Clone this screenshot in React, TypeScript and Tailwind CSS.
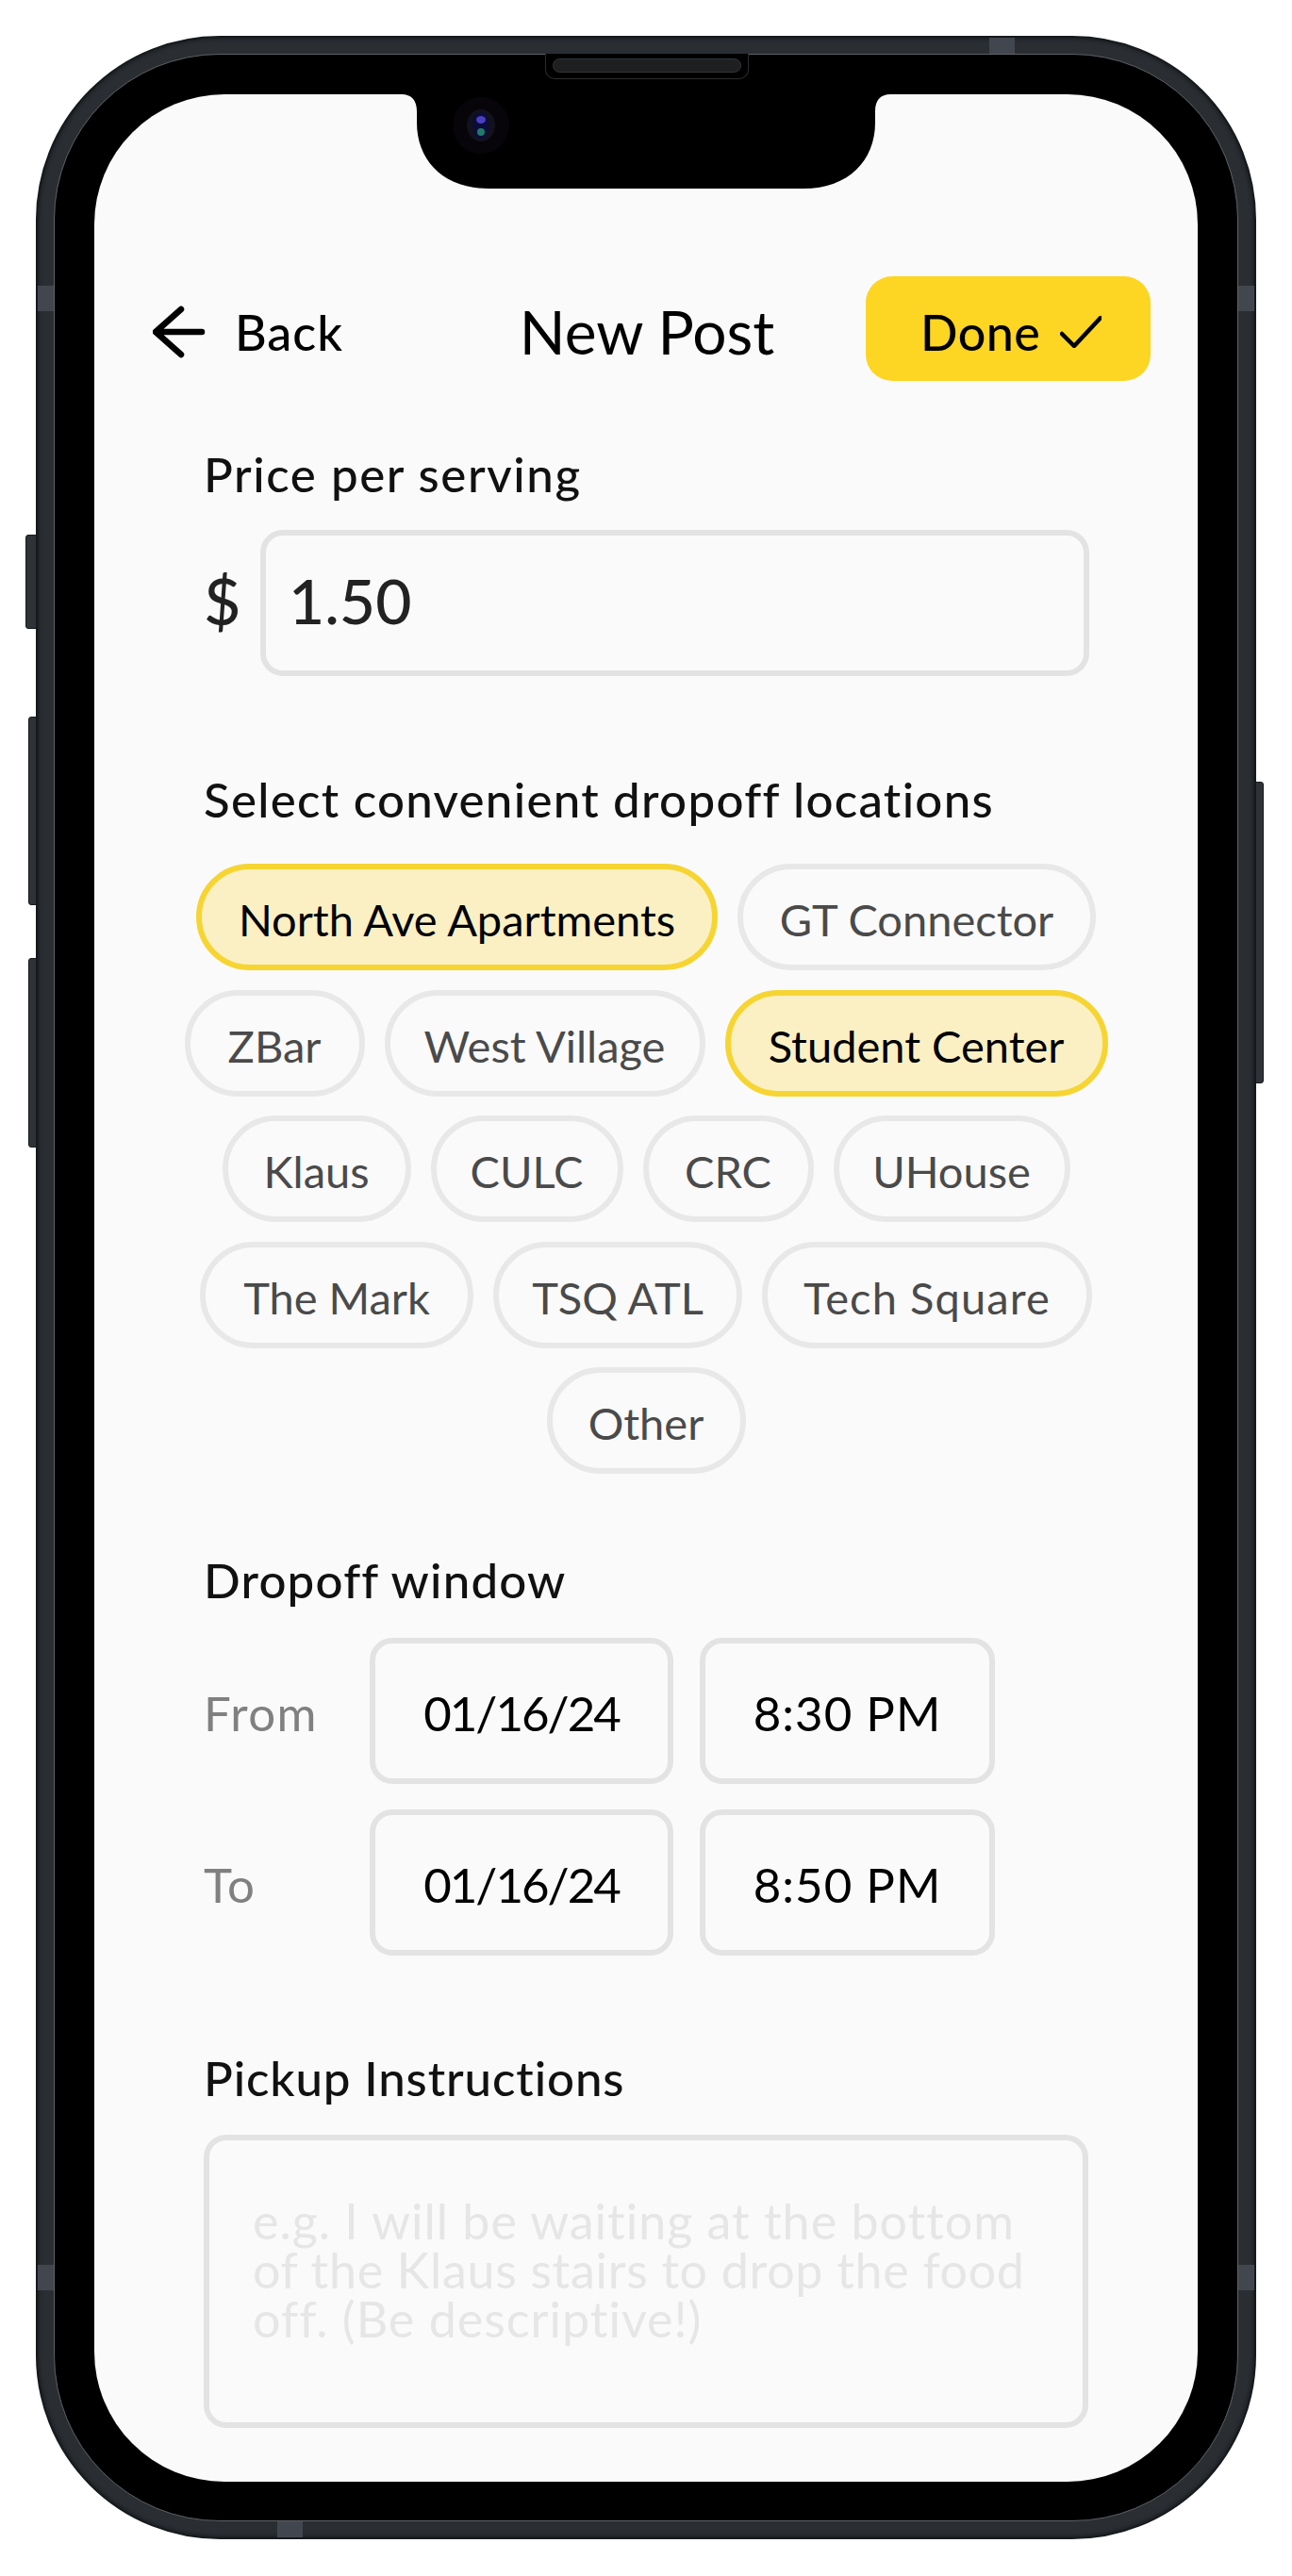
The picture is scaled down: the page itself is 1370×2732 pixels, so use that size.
const font = "font-['Lato','Liberation_Sans',sans-serif]";

const chips = [
  { label: "North Ave Apartments", width: "w-[553px]", selected: true },
  { label: "GT Connector", width: "w-[380px]", selected: false },
  { label: "ZBar", width: "w-[191px]", selected: false },
  { label: "West Village", width: "w-[340px]", selected: false },
  { label: "Student Center", width: "w-[406px]", selected: true },
  { label: "Klaus", width: "w-[200px]", selected: false },
  { label: "CULC", width: "w-[204px]", selected: false },
  { label: "CRC", width: "w-[181px]", selected: false },
  { label: "UHouse", width: "w-[251px]", selected: false },
  { label: "The Mark", width: "w-[290px]", selected: false },
  { label: "TSQ ATL", width: "w-[264px]", selected: false },
  { label: "Tech Square", width: "w-[350px] tracking-[1.1px]", selected: false },
  { label: "Other", width: "w-[211px]", selected: false },
];

function Chip({ label, width, selected }: { label: string; width: string; selected: boolean }) {
  return (
    <div
      className={`${width} h-[113px] rounded-full border-[6px] flex items-center justify-center pt-[6px] text-[47px] ${
        selected ? "bg-[#fbf0c3] border-[#f6d533] text-black" : "border-[#e8e8e8] text-[#4a4a4a]"
      }`}
    >
      {label}
    </div>
  );
}

function Label({ children, className = "" }: { children: React.ReactNode; className?: string }) {
  return <div className={`h-[60px] leading-[60px] text-[51px] font-medium text-[#111] ${className}`}>{children}</div>;
}

function TimeBox({ className, children }: { className: string; children: React.ReactNode }) {
  return (
    <div className={`${className} h-[155px] rounded-[24px] border-[6px] border-[#e3e3e3] flex items-center justify-center pt-[6px] text-[51px] text-black`}>
      {children}
    </div>
  );
}

function Band({ className }: { className: string }) {
  return <div className={`absolute bg-[#42474f] ${className}`} />;
}

function SideButton({ className }: { className: string }) {
  return <div className={`absolute bg-[#2f3338] border border-[#17191c] rounded-[3px] ${className}`} />;
}

function TimeRow({ label, labelTracking, date, time }: { label: string; labelTracking: string; date: string; time: string }) {
  return (
    <div className="flex items-center">
      <div className={`w-[176px] pt-[6px] text-[51px] text-[#808080] ${labelTracking}`}>{label}</div>
      <TimeBox className="w-[322px] tracking-[-2px]">{date}</TimeBox>
      <div className="w-[28px]" />
      <TimeBox className="w-[313px] tracking-[1px]">{time}</TimeBox>
    </div>
  );
}

export default function App() {
  return (
    <div className={`w-[1370px] h-[2732px] bg-white pt-[38px] pl-[38px] ${font}`}>
      <div className="relative w-[1294px] h-[2655px]">
        <SideButton className="-left-[11px] top-[529px] w-[14px] h-[100px]" />
        <SideButton className="-left-[8px] top-[722px] w-[11px] h-[200px]" />
        <SideButton className="-left-[8px] top-[978px] w-[11px] h-[201px]" />
        <SideButton className="-right-[8px] top-[791px] w-[11px] h-[320px]" />

        <div className="relative w-full h-full rounded-[195px] bg-[#2a2e33] border-2 border-[#16191c] shadow-[inset_0_0_5px_#0f1113] p-[17px]">
          <Band className="left-0 top-[263px] w-[17px] h-[27px]" />
          <Band className="right-0 top-[263px] w-[17px] h-[27px]" />
          <Band className="left-0 top-[2362px] w-[17px] h-[27px]" />
          <Band className="right-0 top-[2362px] w-[17px] h-[27px]" />
          <Band className="left-[1009px] top-0 w-[27px] h-[17px]" />
          <Band className="left-[254px] bottom-0 w-[27px] h-[17px]" />

          <div className="relative w-full h-full rounded-[176px] bg-black border border-[#5e6266] pt-[42px] pl-[42px]">
            {/* speaker */}
            <div className="absolute left-[520px] -top-px w-[216px] h-[27px] rounded-b-[10px] border border-t-0 border-[#2a2c2f] bg-black flex justify-center pt-[5px]">
              <div className="w-[200px] h-[15px] rounded-full bg-[#1e1f21] border border-[#333538]" />
            </div>

            <div className="relative w-[1170px] h-[2532px] rounded-[138px] bg-[#fafafa] overflow-hidden">
              {/* notch */}
              <svg className="absolute left-[320px] top-0" width="530" height="100" viewBox="0 0 530 100">
                <path d="M0 0H6C16 0 22 6 22 18V30C22 70 50 100 98 100H432C480 100 508 70 508 30V18C508 6 514 0 524 0H530V0Z" fill="#000" />
                <circle cx="90" cy="33" r="30" fill="#07050a" />
                <ellipse cx="90" cy="33" rx="15" ry="17" fill="#12121c" />
                <ellipse cx="90" cy="33" rx="9" ry="14" fill="#0c0c3a" />
                <ellipse cx="90" cy="27" rx="5" ry="4" fill="#4a3fc0" />
                <ellipse cx="90" cy="40" rx="4" ry="4" fill="#1f7a6a" />
              </svg>

              {/* header */}
              <div className="flex items-center pt-[193px] pl-[62px] pr-[50px]">
                <div className="w-[292px] flex items-center pt-[6px] text-[52px] font-medium tracking-[1px] text-black">
                  <svg width="56" height="56" viewBox="0 0 56 56" fill="none" stroke="#000" strokeWidth="6.5" strokeLinecap="round" strokeLinejoin="round">
                    <path d="M52 28H4M30 4L3 28L30 52" />
                  </svg>
                  <span className="ml-[31px]">Back</span>
                </div>
                <div className="flex-1 text-center pt-[6px] text-[64px] text-black">New Post</div>
                <div className="w-[302px] h-[111px] rounded-[28px] bg-[#fdd523] flex items-center pl-[58px] pt-[6px] text-[52px] font-medium tracking-[0.5px] text-black">
                  Done
                  <svg className="ml-[21px]" width="44" height="34" viewBox="0 0 44 34" fill="none" stroke="#000" strokeWidth="4.5" strokeLinecap="round" strokeLinejoin="round">
                    <path d="M2 19L15 32L43 2" />
                  </svg>
                </div>
              </div>

              <div className="pl-[116px]">
                <Label className="mt-[69px] tracking-[1.6px]">Price per serving</Label>
                <div className="mt-[29px] flex items-center">
                  <div className="w-[60px] pb-[6px] text-[68px] font-medium text-[#222]">$</div>
                  <div className="w-[879px] h-[155px] rounded-[24px] border-[6px] border-[#e3e3e3] flex items-center pl-[24px] pb-[6px] text-[66px] font-medium text-[#222]">
                    1.50
                  </div>
                </div>

                <Label className="mt-[101px] tracking-[1.3px]">Select convenient dropoff locations</Label>
              </div>

              <div className="mt-[38px] mx-auto w-[1000px] flex flex-wrap justify-center gap-x-[21px] gap-y-[20.5px]">
                {chips.map((c) => (
                  <Chip key={c.label} {...c} />
                ))}
              </div>

              <div className="pl-[116px]">
                <Label className="mt-[83px] tracking-[1.2px]">Dropoff window</Label>
                <div className="mt-[31px] flex flex-col gap-[27px]">
                  <TimeRow label="From" labelTracking="tracking-[1.5px]" date="01/16/24" time="8:30 PM" />
                  <TimeRow label="To" labelTracking="tracking-[1px]" date="01/16/24" time="8:50 PM" />
                </div>

                <Label className="mt-[100px] tracking-[0.9px]">Pickup Instructions</Label>
                <div className="mt-[30px] w-[938px] h-[311px] rounded-[24px] border-[6px] border-[#e3e3e3] pt-[59px] pl-[46px] text-[52px] leading-[52px] tracking-[1px] text-[#e6e6e6]">
                  e.g. I will be waiting at the bottom
                  <br />
                  <span className="tracking-[0.7px]">of the Klaus stairs to drop the food</span>
                  <br />
                  off. (Be descriptive!)
                </div>
              </div>
            </div>
          </div>
        </div>
      </div>
    </div>
  );
}
